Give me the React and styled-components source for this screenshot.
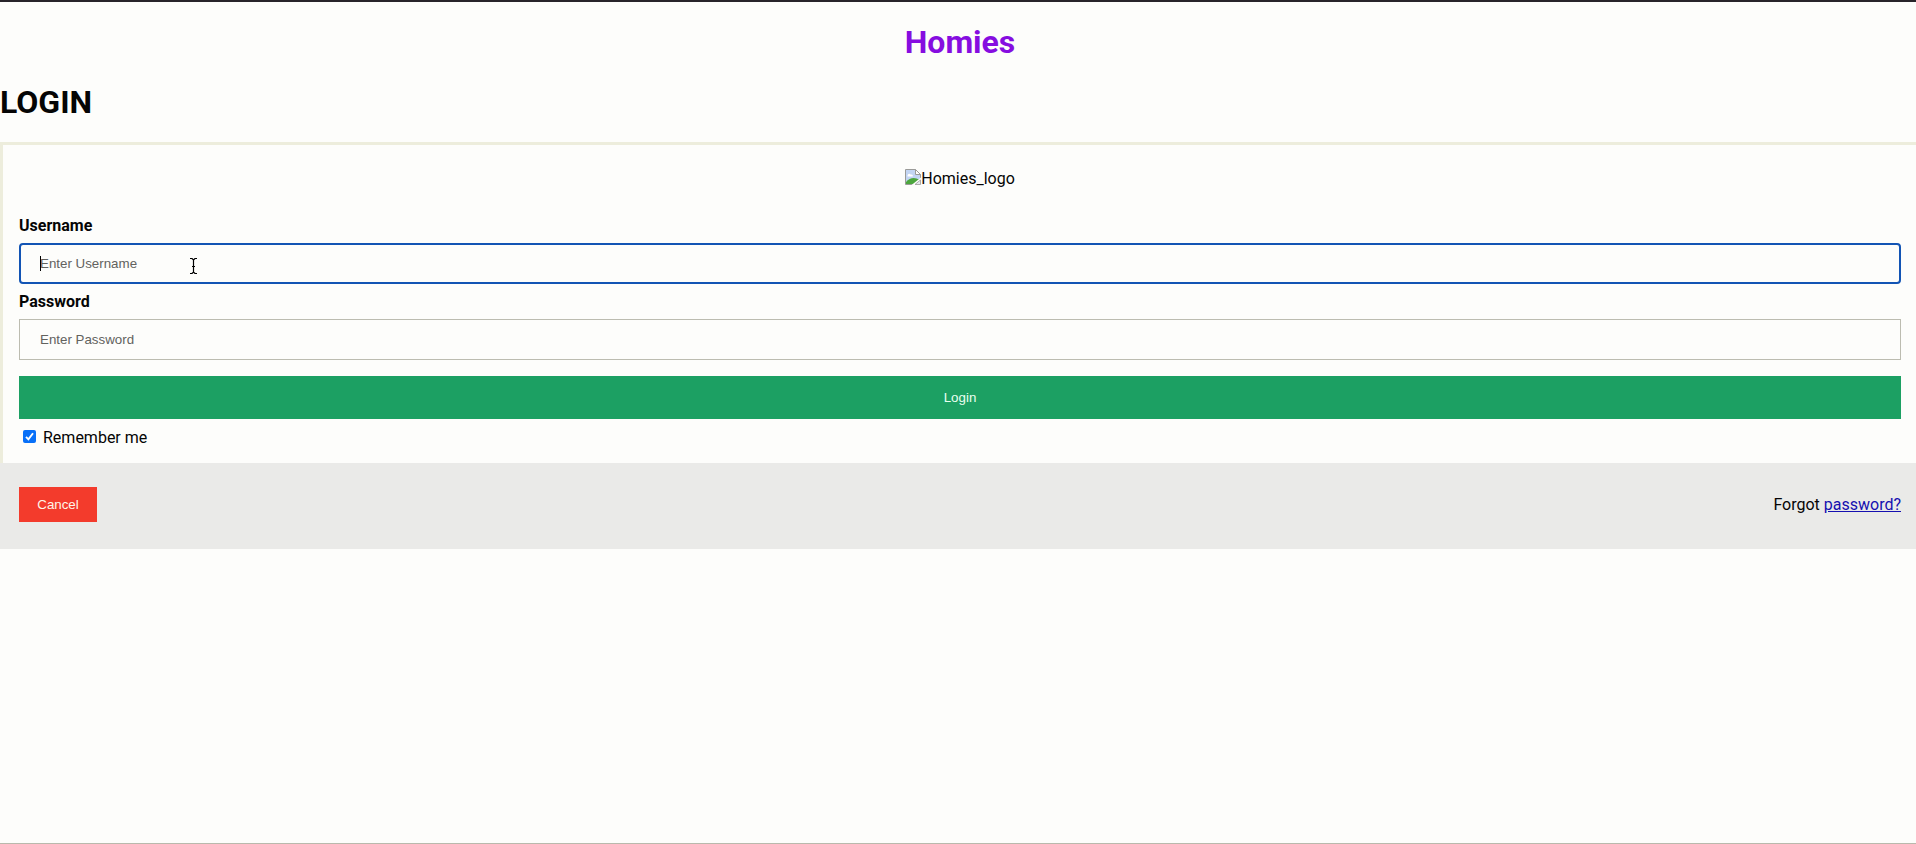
import React from "react";
import styled, { createGlobalStyle } from "styled-components";

const GlobalStyle = createGlobalStyle`
  html, body { margin: 0; padding: 0; overflow: hidden; background: #fdfdfb; }
  *, *::before, *::after { box-sizing: border-box; }
`;

const Page = styled.div`
  width: 1920px;
  height: 844px;
  border-top: 2px solid #28242a;
  border-bottom: 1px solid #b9b9ac;
  font-family: Roboto, sans-serif;
  font-size: 16px;
  line-height: 19px;
  color: #050505;
`;

const Brand = styled.h1`
  margin: 21px 0 0;
  font-size: 32px;
  line-height: 38px;
  font-weight: 700;
  text-align: center;
  color: #860de0;
`;

const Heading = styled.h1`
  margin: 22px 0 0;
  font-size: 32px;
  line-height: 38px;
  font-weight: 700;
`;

const Form = styled.form`
  margin-top: 21px;
  border: 3px solid #ededdc;
  border-bottom: 0;
`;

const LogoRow = styled.div`
  display: flex;
  justify-content: center;
  align-items: flex-start;
  height: 55px;
  padding-top: 24px;
`;

const BrokenImage = styled.svg`
  display: block;
  width: 16px;
  height: 16px;
`;

const Fields = styled.div`
  display: flex;
  flex-direction: column;
  padding: 16px;
  height: 263px;
  & > * { flex-shrink: 0; }
`;

const Label = styled.label`
  font-weight: 700;
  line-height: 19px;
`;

const controlFont = `
  font-family: "Liberation Sans", Arial, sans-serif;
  font-size: 13.333px;
`;

const InputShell = styled.div`
  position: relative;
  height: 41px;
  margin: 8px 0;
  border: ${(p) => (p.$focused ? "2px solid #1254b4" : "1px solid #bcbcb0")};
  border-radius: ${(p) => (p.$focused ? "4px" : "0")};
  padding: 0 ${(p) => (p.$focused ? "19px" : "20px")};
  display: flex;
`;

const Input = styled.input`
  ${controlFont}
  flex: 1;
  min-width: 0;
  padding: 0;
  border: 0;
  outline: 0;
  background: transparent;
  &::placeholder { color: #62625e; opacity: 1; }
`;

const Caret = styled.span`
  position: absolute;
  left: 19px;
  top: 11px;
  width: 1px;
  height: 15px;
  background: #000;
`;

const Pointer = styled.svg`
  position: absolute;
  left: 169px;
  top: 13px;
  width: 7px;
  height: 16px;
`;

const LoginButton = styled.button`
  ${controlFont}
  height: 43px;
  margin: 8px 0;
  border: 0;
  color: #e9fff1;
  background: #1ca063;
`;

const Remember = styled.label`
  display: flex;
  align-items: center;
  height: 21px;
  padding-left: 4px;
  gap: 7px;
`;

const Checkbox = styled.span`
  display: flex;
  width: 13px;
  height: 13px;
  margin-bottom: 2px;
  border-radius: 2px;
  background: #0870f8;
`;

const Footer = styled.footer`
  display: flex;
  justify-content: space-between;
  align-items: flex-start;
  height: 86px;
  padding: 24px 19px 0;
  background: #eaeae8;
`;

const CancelButton = styled.button`
  ${controlFont}
  width: 78px;
  height: 35px;
  padding: 0;
  border: 0;
  color: #fff5e8;
  background: #f33b2c;
`;

const Forgot = styled.span`
  padding-top: 8px;
`;

const Link = styled.a`
  color: #1510b0;
  text-decoration: underline;
`;

function Field({ id, label, type, placeholder, focused, children }) {
  return (
    <>
      <Label htmlFor={id}>{label}</Label>
      <InputShell $focused={focused}>
        <Input id={id} type={type} placeholder={placeholder} />
        {children}
      </InputShell>
    </>
  );
}

export default function App() {
  return (
    <>
      <GlobalStyle />
      <Page>
        <Brand>Homies</Brand>
        <Heading>LOGIN</Heading>
        <Form onSubmit={(e) => e.preventDefault()}>
          <LogoRow>
            <BrokenImage viewBox="0 0 16 16">
              <path d="M.5.5h10l5 5v10H.5z" fill="#c3d5f3" stroke="#9b9b98" />
              <path d="M10.5.5v5h5z" fill="#fff" stroke="#9b9b98" />
              <path d="M2.500 7c0-2 2-3 3-1.500 2-.5 3 1 2 2h-5z" fill="#fff" />
              <path d="M1 15v-2c3-3.500 7-5 10.500-3.500L15 11v4z" fill="#4ca63d" />
              <path d="M6.500 16 16 8.500V16z" fill="#fdfdfb" />
              <path d="M10 15.500l5.500-4.500v4.500z" fill="#e5e9ef" stroke="#9b9b98" strokeWidth=".8" />
            </BrokenImage>
            <span>Homies_logo</span>
          </LogoRow>
          <Fields>
            <Field id="username" label="Username" type="text" placeholder="Enter Username" focused>
              <Caret />
              <Pointer viewBox="0 0 7 16">
                <path
                  d="M0 .5h2L3.500 2 5 .5h2M3.500 1.500v13M0 15.500h2L3.500 14 5 15.500h2M2 8.500h3"
                  fill="none"
                  stroke="#000"
                  strokeWidth="1.200"
                />
              </Pointer>
            </Field>
            <Field id="password" label="Password" type="password" placeholder="Enter Password" />
            <LoginButton type="submit">Login</LoginButton>
            <Remember>
              <Checkbox>
                <svg width="13" height="13" viewBox="0 0 13 13">
                  <path d="M3 6.800 5.400 9.300 10 3.200" fill="none" stroke="#fff" strokeWidth="1.900" />
                </svg>
              </Checkbox>
              Remember me
            </Remember>
          </Fields>
        </Form>
        <Footer>
          <CancelButton type="button">Cancel</CancelButton>
          <Forgot>
            Forgot <Link href="#">password?</Link>
          </Forgot>
        </Footer>
      </Page>
    </>
  );
}
